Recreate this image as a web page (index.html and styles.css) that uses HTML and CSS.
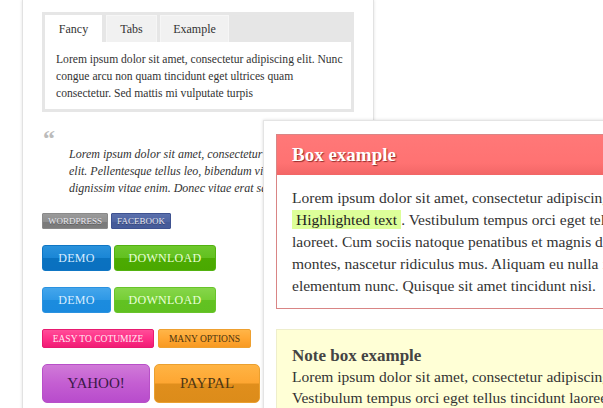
FILE: index.html
```html
<!DOCTYPE html>
<html>
<head>
<meta charset="utf-8">
<link rel="stylesheet" href="styles.css">
</head>
<body>
<div class="page">
  <div class="left-panel">
    <div class="tabs">
      <div class="tab-row">
        <div class="tab active">Fancy</div>
        <div class="tab">Tabs</div>
        <div class="tab">Example</div>
      </div>
      <div class="tab-body">Lorem ipsum dolor sit amet, consectetur adipiscing elit. Nunc<br>congue arcu non quam tincidunt eget ultrices quam<br>consectetur. Sed mattis mi vulputate turpis</div>
    </div>
    <div class="quote">
      <div class="quote-mark">&ldquo;</div>
      <p class="quote-text">Lorem ipsum dolor sit amet, consectetur adipiscing<br>elit. Pellentesque tellus leo, bibendum vitae<br>dignissim vitae enim. Donec vitae erat sapien.</p>
    </div>
    <div class="btn-row row-small">
      <span class="btn tiny gray">WORDPRESS</span>
      <span class="btn tiny fb">FACEBOOK</span>
    </div>
    <div class="btn-row row-mid">
      <span class="btn mid blue w-demo">DEMO</span>
      <span class="btn mid green w-dl">DOWNLOAD</span>
    </div>
    <div class="btn-row row-mid">
      <span class="btn mid blue2 w-demo">DEMO</span>
      <span class="btn mid green2 w-dl">DOWNLOAD</span>
    </div>
    <div class="btn-row row-sm">
      <span class="btn sm pink w-easy">EASY TO COTUMIZE</span>
      <span class="btn sm orange w-many">MANY OPTIONS</span>
    </div>
    <div class="btn-row row-big">
      <span class="btn big purple w-yahoo">YAHOO!</span>
      <span class="btn big orange2 w-paypal">PAYPAL</span>
    </div>
  </div>

  <div class="right-panel">
    <div class="box">
      <div class="box-head">Box example</div>
      <div class="box-body">Lorem ipsum dolor sit amet, consectetur adipiscing elit.<br><span class="hl">Highlighted text</span>. Vestibulum tempus orci eget tellus tincidunt<br>laoreet. Cum sociis natoque penatibus et magnis dis parturient<br>montes, nascetur ridiculus mus. Aliquam eu nulla in velit<br>elementum nunc. Quisque sit amet tincidunt nisi.</div>
    </div>
    <div class="note">
      <div class="note-title">Note box example</div>
      <div class="note-text">Lorem ipsum dolor sit amet, consectetur adipiscing elit.<br>Vestibulum tempus orci eget tellus tincidunt laoreet.</div>
    </div>
  </div>
</div>
</body>
</html>
```
FILE: styles.css
```css
html, body {
  margin: 0;
  padding: 0;
  background: #fff;
  overflow: hidden;
}
body {
  font-family: "Liberation Serif", "DejaVu Serif", serif;
  color: #333;
  width: 603px;
  height: 408px;
}
.page {
  position: relative;
  width: 603px;
  height: 408px;
  overflow: hidden;
}
.left-panel {
  margin-left: 22px;
  width: 331px;
  height: 420px;
  padding: 12px 0 0 19px;
  border-left: 1px solid #e2e2e2;
  border-right: 1px solid #e2e2e2;
  box-shadow: 0 0 3px rgba(0,0,0,0.12);
  background: #fff;
}
.tabs {
  width: 306px;
  background: #e6e6e6;
  padding: 3px;
}
.tab-row {
  display: flex;
  gap: 3px;
  height: 27px;
}
.tab {
  font-size: 12px;
  line-height: 27px;
  text-align: center;
  background: #f1f1f1;
  border: 1px solid #f6f6f6;
  border-bottom: none;
  box-sizing: border-box;
  color: #333;
}
.tab:nth-child(1) { width: 57px; }
.tab:nth-child(2) { width: 51px; margin-left: 1px; }
.tab:nth-child(3) { width: 69px; }
.tab.active {
  background: #fff;
  border-color: #fff;
}
.tab-body {
  background: #fff;
  font-size: 11.6px;
  line-height: 17px;
  padding: 9px 6px 7px 11px;
  height: 51px;
  white-space: nowrap;
}
.quote {
  margin-top: 16px;
  height: 85px;
}
.quote-mark {
  font-size: 24px;
  font-weight: bold;
  color: #bbb;
  line-height: 20px;
  height: 12px;
  padding-left: 1px;
}
.quote-text {
  margin: 6px 0 0 27px;
  font-style: italic;
  font-size: 12px;
  line-height: 17px;
  color: #333;
  white-space: nowrap;
}
.btn-row {
  display: flex;
  gap: 3px;
}
.btn {
  display: flex;
  align-items: center;
  justify-content: center;
  box-sizing: border-box;
  font-family: "Liberation Serif", serif;
  text-transform: uppercase;
}
.tiny {
  height: 16px;
  font-size: 9px;
  color: #e8e8f0;
  border-radius: 1px;
  text-shadow: 0 1px 0 rgba(0,0,0,0.3);
}
.gray {
  width: 66px;
  background: linear-gradient(#9a9a9a 0%, #8f8f8f 55%, #7a7a7a 56%, #7c7c7c 100%);
  border: 1px solid #8a8a8a;
}
.fb {
  width: 60px;
  background: linear-gradient(#5a6fac 0%, #4e64a2 55%, #455a98 56%, #475c9a 100%);
  border: 1px solid #3e5290;
}
.row-mid { margin-top: 16px; }
.mid {
  height: 26px;
  font-size: 12px;
  border-radius: 3px;
  color: #d8ecff;
  letter-spacing: 0.3px;
}
.w-demo { width: 69px; }
.w-dl { width: 102px; }
.blue {
  background: linear-gradient(#2a92dc 0%, #1a86d6 50%, #0a72c0 52%, #0a70c0 100%);
  border: 1px solid #0f76c4;
}
.green {
  background: linear-gradient(#6ec82c 0%, #62c020 50%, #4cab02 52%, #4aa800 100%);
  border: 1px solid #52b210;
  color: #e8ffd8;
}
.blue2 {
  background: linear-gradient(#44a6ec 0%, #2e98e6 50%, #1c8cde 52%, #1a8ade 100%);
  border: 1px solid #2a92e0;
}
.green2 {
  background: linear-gradient(#86d64a 0%, #76ce36 50%, #62c222 52%, #60c020 100%);
  border: 1px solid #68c42a;
  color: #eaffda;
}
.row-sm { margin-top: 16px; gap: 4px; }
.sm {
  height: 19px;
  font-size: 9.5px;
  border-radius: 2px;
}
.w-easy { width: 112px; }
.w-many { width: 93px; }
.pink {
  background: linear-gradient(#ff4d98 0%, #ff3088 50%, #f01c74 100%);
  border: 1px solid #e81a70;
  color: #ffe8f2;
}
.orange {
  background: linear-gradient(#ffb548 0%, #ffa733 50%, #f89a22 100%);
  border: 1px solid #eea030;
  color: #4a3510;
}
.row-big { margin-top: 16px; gap: 4px; }
.big {
  height: 39px;
  font-size: 15px;
  border-radius: 5px;
}
.w-yahoo { width: 108px; }
.w-paypal { width: 106px; }
.purple {
  background: linear-gradient(#d07ad8 0%, #c45ed2 50%, #b84ccc 100%);
  border: 1px solid #b850c8;
  color: #3a1848;
}
.orange2 {
  background: linear-gradient(#ffb444 0%, #fea632 48%, #e08e1c 52%, #dc8c1a 100%);
  border: 1px solid #eaa030;
  color: #503814;
}

.right-panel {
  position: absolute;
  left: 263px;
  top: 120px;
  width: 360px;
  height: 300px;
  background: #fff;
  border-left: 1px solid #e4e4e4;
  border-top: 1px solid #e4e4e4;
  box-shadow: 0 0 3px rgba(0,0,0,0.15);
  padding: 13px 0 0 12px;
}
.box {
  width: 420px;
  border: 1px solid #d98585;
}
.box-head {
  height: 40px;
  background: linear-gradient(#ff7878 0%, #ff7272 70%, #f26666 100%);
  color: #fff;
  font-weight: bold;
  font-size: 19px;
  line-height: 40px;
  padding-left: 15px;
  text-shadow: 1px 1px 1px rgba(80,0,0,0.6);
}
.box-body {
  background: #fff;
  font-size: 15.5px;
  line-height: 22px;
  padding: 12px 15px 11px 15px;
  color: #333;
  white-space: nowrap;
}
.hl {
  background: #ddff99;
  padding: 1px 4px;
  color: #222;
}
.note {
  margin-top: 20px;
  width: 420px;
  height: 120px;
  background: #ffffd6;
  border: 1px solid #eeeecc;
  padding: 16px 15px 0 15px;
  font-size: 15.5px;
  line-height: 21px;
}
.note-title {
  font-weight: bold;
  font-size: 17px;
  color: #444;
  line-height: 20px;
}
.note-text { color: #333; white-space: nowrap; }
```
